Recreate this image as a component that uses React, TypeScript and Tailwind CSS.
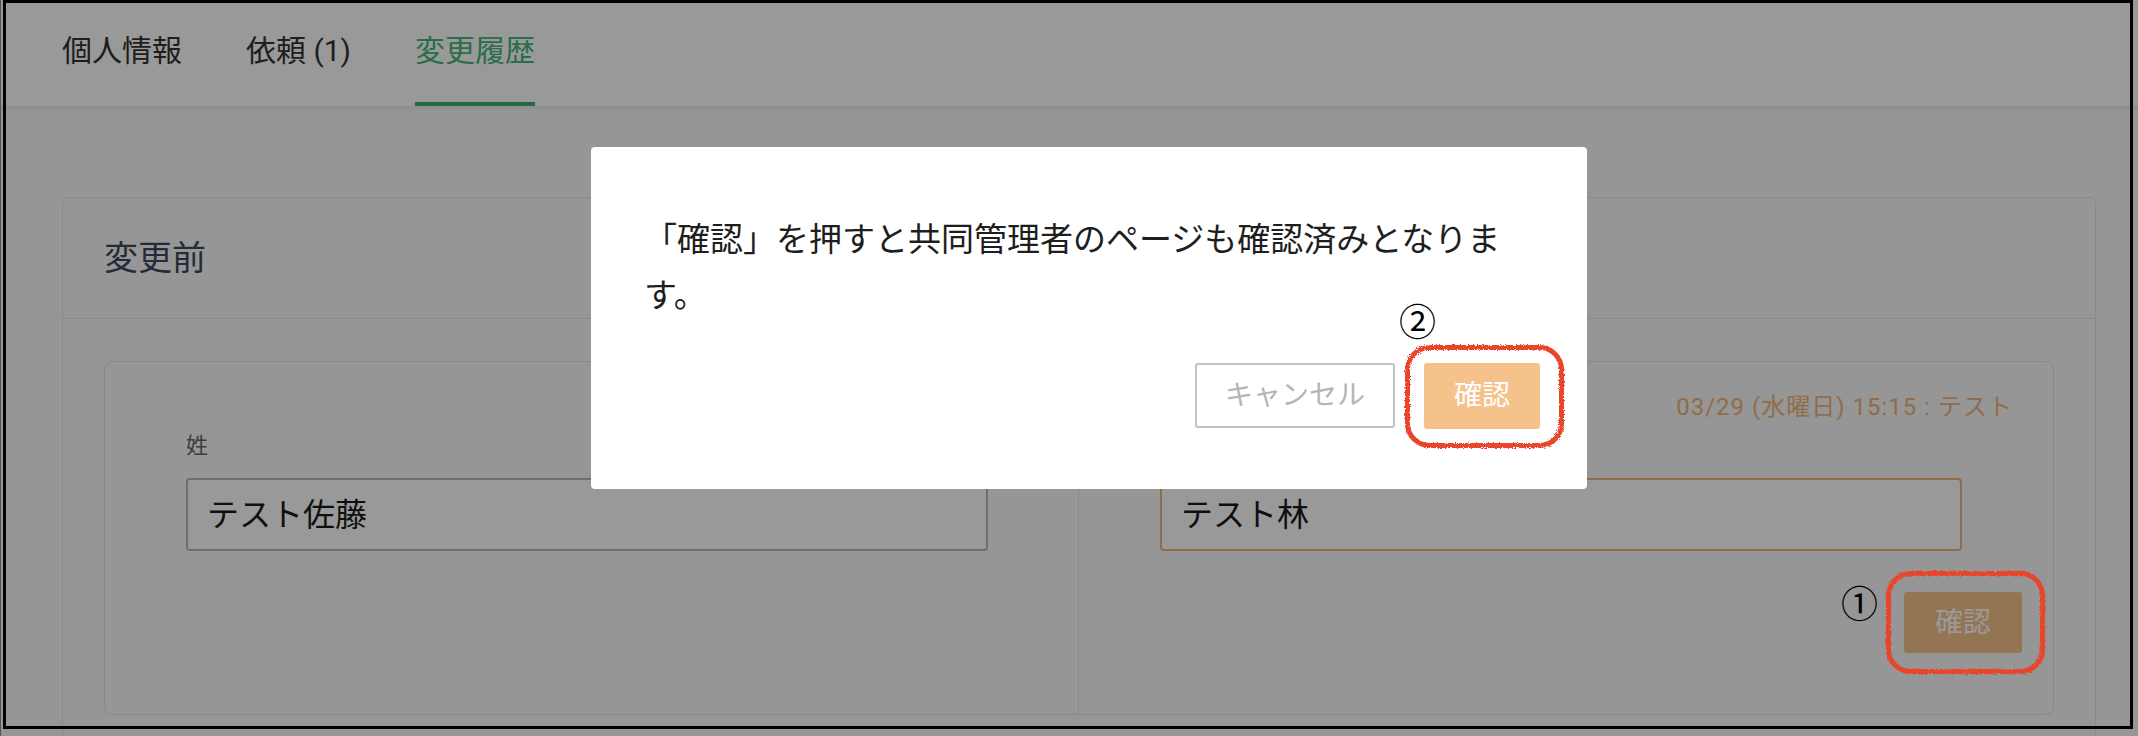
import React from "react";

function Tab({ label, active }: { label: string; active?: boolean }) {
  return (
    <div className="flex flex-col pt-[36px]">
      <span
        className={
          "text-[30px] leading-[30px] whitespace-nowrap " +
          (active ? "text-[#45b87a]" : "text-[#333333]")
        }
      >
        {label}
      </span>
      <div className={"mt-[36px] h-[4px] " + (active ? "bg-[#3fae72]" : "bg-transparent")} />
    </div>
  );
}

function Column({
  date,
  value,
  highlight,
  button,
  border,
}: {
  date?: string;
  value: string;
  highlight?: boolean;
  button?: boolean;
  border?: boolean;
}) {
  return (
    <div
      className={
        "flex flex-col pt-[33px] pl-[81px] pr-[31px] " +
        (border ? "border-r border-[#e3e3e3]" : "")
      }
    >
      <div className="h-[24px] pr-[9px] text-right text-[24px] leading-[24px] tracking-[1px] text-[#f2b47c] whitespace-nowrap">
        {date ?? ""}
      </div>
      <div className="mt-[16px] text-[22px] leading-[22px] text-[#666666]">姓</div>
      <div
        className={
          "mt-[21px] w-[802px] h-[73px] rounded-[4px] border-2 flex items-center pl-[19px] text-[32px] text-[#1a1a1a] bg-white " +
          (highlight ? "border-[#f2b47c]" : "border-[#b8b8b8]")
        }
      >
        {value}
      </div>
      {button && (
        <div className="mt-[41px] flex justify-end">
          <button className="w-[118px] h-[61px] rounded-[3px] bg-[#f6c28b] text-white text-[28px] leading-none">
            確認
          </button>
        </div>
      )}
    </div>
  );
}

function RoughBox({ left, top }: { left: string; top: string }) {
  return (
    <svg
      className={"absolute " + left + " " + top}
      width="166"
      height="110"
      viewBox="0 0 166 110"
    >
      <rect
        x="5.5"
        y="5.5"
        width="154"
        height="98"
        rx="22"
        fill="none"
        stroke="#e9442b"
        strokeWidth="5"
        filter="url(#rough)"
      />
    </svg>
  );
}

export default function App() {
  return (
    <div className="relative w-[2138px] h-[736px] overflow-hidden bg-[#fbfbfb] font-['Roboto','Noto_Sans_CJK_JP',sans-serif]">
      <svg width="0" height="0" className="absolute">
        <defs>
          <filter id="rough" x="-10%" y="-10%" width="120%" height="120%">
            <feTurbulence type="fractalNoise" baseFrequency="0.9" numOctaves="2" result="n" />
            <feDisplacementMap in="SourceGraphic" in2="n" scale="4" />
          </filter>
        </defs>
      </svg>

      {/* Page */}
      <div className="h-[106px] bg-white flex gap-[64px] pl-[62px]">
        <Tab label="個人情報" />
        <Tab label="依頼 (1)" />
        <Tab label="変更履歴" active />
      </div>
      <div className="h-[7px] bg-gradient-to-b from-[#e8f1eb] to-[#fbfbfb]" />
      <div className="pl-[62px] pr-[42px] pt-[84px]">
        <div className="border border-[#e4e4e4] rounded-[6px] bg-[#fbfbfb]">
          <div className="h-[121px] flex items-center px-[41px] border-b border-[#e4e4e4]">
            <span className="text-[34px] leading-none text-[#3c4a60]">変更前</span>
          </div>
          <div className="px-[41px] pt-[42px] pb-[40px]">
            <div className="grid grid-cols-2 h-[354px] border border-[#e3e3e3] rounded-[8px] bg-[#fafafa]">
              <Column value="テスト佐藤" border />
              <Column value="テスト林" date="03/29 (水曜日) 15:15 : テスト" highlight button />
            </div>
          </div>
        </div>
      </div>

      {/* Overlay */}
      <div className="absolute inset-0 bg-black/40" />

      {/* Modal */}
      <div className="absolute left-[591px] top-[147px] w-[996px] h-[342px] bg-white rounded-[4px] pl-[53px] pt-[65px]">
        <p className="w-[880px] text-[33px] leading-[56px] text-[#1e1e1e]">
          「確認」を押すと共同管理者のページも確認済みとなります。
        </p>
        <div className="mt-[39px] flex justify-end items-start gap-[29px] pr-[47px]">
          <button className="w-[200px] h-[65px] rounded-[3px] border-2 border-[#c2c2c2] bg-white text-[28px] leading-none text-[#b5b5b5]">
            キャンセル
          </button>
          <button className="w-[116px] h-[66px] rounded-[3px] bg-[#f6c28b] text-white text-[28px] leading-none">
            確認
          </button>
        </div>
      </div>

      {/* Annotations */}
      <span className="absolute left-[1399px] top-[302px] text-[37px] leading-none text-black font-['Noto_Sans_CJK_JP',sans-serif]">
        ②
      </span>
      <span className="absolute left-[1841px] top-[584px] text-[37px] leading-none text-black font-['Noto_Sans_CJK_JP',sans-serif]">
        ①
      </span>
      <RoughBox left="left-[1402px]" top="top-[342px]" />
      <RoughBox left="left-[1883px]" top="top-[568px]" />

      {/* Frame */}
      <div className="absolute left-0 top-0 w-px h-[736px] bg-[#555555]" />
      <div className="absolute left-[3px] top-0 w-[2130px] h-[729px] border-[3px] border-black pointer-events-none" />
    </div>
  );
}
